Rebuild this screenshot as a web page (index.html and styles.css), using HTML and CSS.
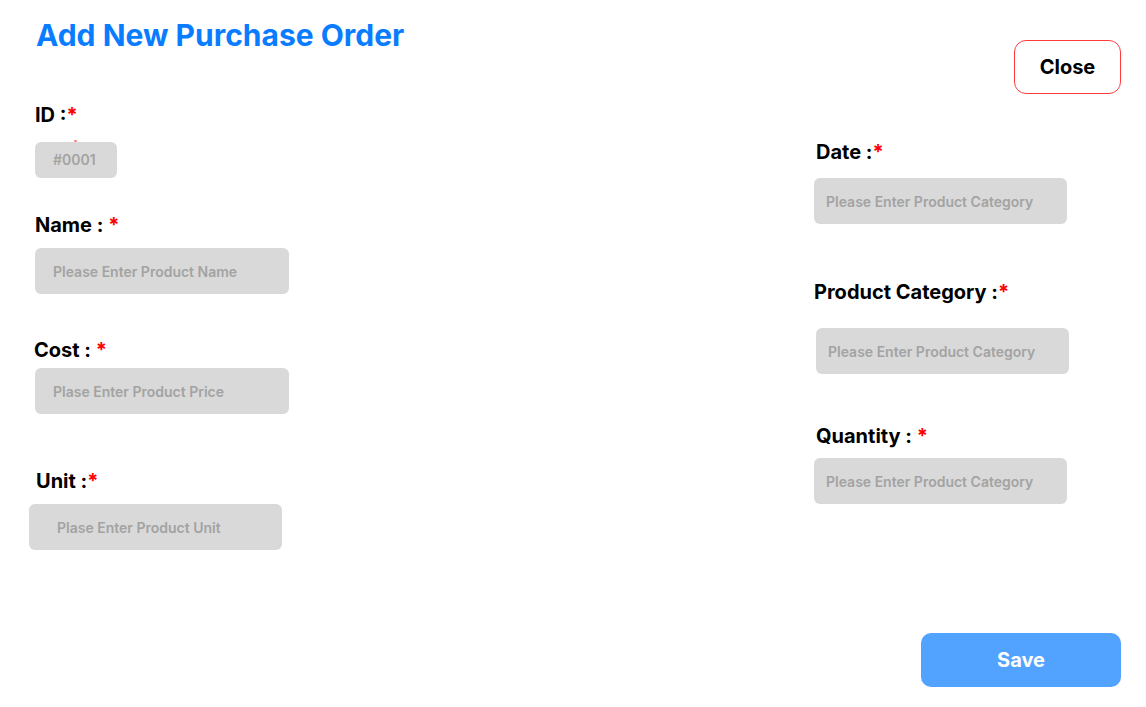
FILE: index.html
```html
<!DOCTYPE html>
<html lang="en">
<head>
<meta charset="utf-8">
<title>Add New Purchase Order</title>
<link rel="stylesheet" href="styles.css">
</head>
<body>
<div class="page">
  <header class="top">
    <h1 class="title">Add New Purchase Order</h1>
    <button class="btn-close" type="button">Close</button>
  </header>

  <div class="columns">
    <div class="col col-left">
      <div class="field f-id">
        <label class="label">ID :<span class="req">*</span></label>
        <span class="stray-dot"></span>
        <div class="input input-id">#0001</div>
      </div>
      <div class="field f-name">
        <label class="label">Name : <span class="req">*</span></label>
        <div class="input">Please Enter Product Name</div>
      </div>
      <div class="field f-cost">
        <label class="label">Cost : <span class="req">*</span></label>
        <div class="input">Plase Enter Product Price</div>
      </div>
      <div class="field f-unit">
        <label class="label">Unit :<span class="req">*</span></label>
        <div class="input input-unit">Plase Enter Product Unit</div>
      </div>
    </div>

    <div class="col col-right">
      <div class="field f-date">
        <label class="label">Date :<span class="req">*</span></label>
        <div class="input input-r">Please Enter Product Category</div>
      </div>
      <div class="field f-cat">
        <label class="label">Product Category :<span class="req">*</span></label>
        <div class="input input-r">Please Enter Product Category</div>
      </div>
      <div class="field f-qty">
        <label class="label">Quantity : <span class="req">*</span></label>
        <div class="input input-r">Please Enter Product Category</div>
      </div>
    </div>
  </div>

  <div class="footer">
    <button class="btn-save" type="button">Save</button>
  </div>
</div>
</body>
</html>
```

FILE: styles.css
```css
* { box-sizing: border-box; }

html, body {
  margin: 0;
  padding: 0;
  background: #ffffff;
}

body {
  font-family: Inter, "Noto Sans", "Liberation Sans", sans-serif;
  color: #000;
}

.page {
  width: 1146px;
  height: 707px;
  display: flex;
  flex-direction: column;
}

.top {
  display: flex;
  justify-content: space-between;
  align-items: flex-start;
  padding: 0 25px 0 36px;
  height: 94px;
}

.title {
  margin: 17px 0 0 0;
  font-size: 30px;
  line-height: 36px;
  font-weight: 700;
  color: #0a7cff;
}

.btn-close {
  margin-top: 40px;
  width: 107px;
  height: 54px;
  border: 1px solid #ff3b3b;
  border-radius: 12px;
  background: #fff;
  font-family: inherit;
  font-size: 20px;
  font-weight: 700;
  color: #000;
  padding: 0;
}

.columns {
  display: flex;
  align-items: flex-start;
  padding-left: 35px;
}

.col {
  display: flex;
  flex-direction: column;
  align-items: flex-start;
}

.col-left { width: 779px; }

.field {
  position: relative;
  display: flex;
  flex-direction: column;
  align-items: flex-start;
}

.label {
  font-size: 20px;
  line-height: 24px;
  font-weight: 700;
  color: #000;
}

.req { color: #ff0000; }

.input {
  width: 254px;
  height: 46px;
  border-radius: 6px;
  background: #d9d9d9;
  color: #a3a3a3;
  font-size: 14px;
  font-weight: 600;
  display: flex;
  align-items: center;
  padding-left: 18px;
}

.input-id {
  width: 82px;
  height: 36px;
  padding-left: 18px;
}

.input-unit {
  width: 253px;
  padding-left: 28px;
  margin-left: -6px;
}

.input-r {
  width: 253px;
  padding-left: 12px;
}

.stray-dot {
  position: absolute;
  left: 39px;
  top: 37px;
  width: 3px;
  height: 2px;
  border-radius: 1px;
  background: #ff8080;
}

/* left column vertical rhythm */
.f-id { margin-top: 8.5px; gap: 15px; }
.f-name { margin-top: 35.5px; gap: 11px; }
.f-cost { margin-top: 43.5px; gap: 6.5px; }
.f-cost .label { margin-left: -1px; }
.f-unit { margin-top: 55px; gap: 11px; }
.f-unit .label { margin-left: 1px; }

/* right column */
.f-date { margin-top: 45.5px; gap: 14.5px; }
.f-date .label { margin-left: 2px; }
.f-cat { margin-top: 56px; gap: 24px; }
.f-cat .input { margin-left: 2px; }
.f-qty { margin-top: 50px; gap: 10px; }
.f-qty .label { margin-left: 2px; }

.footer {
  display: flex;
  justify-content: flex-end;
  padding-right: 25px;
  margin-top: 83px;
}

.btn-save {
  width: 200px;
  height: 54px;
  border: none;
  border-radius: 10px;
  background: #52a3ff;
  color: #fff;
  font-family: inherit;
  font-size: 20px;
  font-weight: 700;
  padding: 0;
}
```
